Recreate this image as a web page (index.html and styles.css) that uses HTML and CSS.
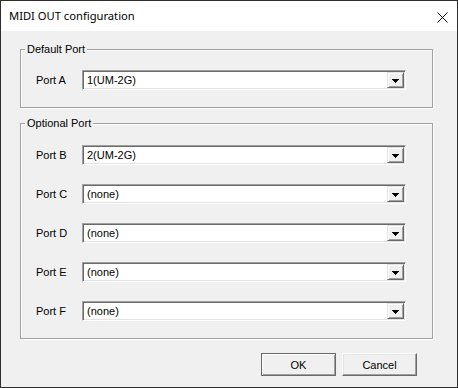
FILE: index.html
```html
<!DOCTYPE html>
<html lang="en">
<head>
  <meta charset="UTF-8" />
  <title>MIDI OUT configuration</title>
  <link rel="stylesheet" href="styles.css">
</head>
<body>
  <div class="window">
    <div class="titlebar">
      <span class="title">MIDI OUT configuration</span>
      <svg class="close" width="11" height="11" viewBox="0 0 11 11"><path d="M0.5 0.5L10.5 10.5M10.5 0.5L0.5 10.5" stroke="#000" stroke-width="1" fill="none"/></svg>
    </div>
    <div class="client">
      <div class="group group-default">
        <span class="group-title">Default Port</span>
        <div class="rows">
          <div class="row">
            <label>Port A</label>
            <div class="combo"><span class="value">1(UM-2G)</span><span class="drop"><svg width="7" height="4" viewBox="0 0 7 4" shape-rendering="crispEdges"><path d="M0 0h7v1H0zM1 1h5v1H1zM2 2h3v1H2zM3 3h1v1H3z" fill="#000"/></svg></span></div>
          </div>
        </div>
      </div>
      <div class="group group-optional">
        <span class="group-title">Optional Port</span>
        <div class="rows">
          <div class="row">
            <label>Port B</label>
            <div class="combo"><span class="value">2(UM-2G)</span><span class="drop"><svg width="7" height="4" viewBox="0 0 7 4" shape-rendering="crispEdges"><path d="M0 0h7v1H0zM1 1h5v1H1zM2 2h3v1H2zM3 3h1v1H3z" fill="#000"/></svg></span></div>
          </div>
          <div class="row">
            <label>Port C</label>
            <div class="combo"><span class="value">(none)</span><span class="drop"><svg width="7" height="4" viewBox="0 0 7 4" shape-rendering="crispEdges"><path d="M0 0h7v1H0zM1 1h5v1H1zM2 2h3v1H2zM3 3h1v1H3z" fill="#000"/></svg></span></div>
          </div>
          <div class="row">
            <label>Port D</label>
            <div class="combo"><span class="value">(none)</span><span class="drop"><svg width="7" height="4" viewBox="0 0 7 4" shape-rendering="crispEdges"><path d="M0 0h7v1H0zM1 1h5v1H1zM2 2h3v1H2zM3 3h1v1H3z" fill="#000"/></svg></span></div>
          </div>
          <div class="row">
            <label>Port E</label>
            <div class="combo"><span class="value">(none)</span><span class="drop"><svg width="7" height="4" viewBox="0 0 7 4" shape-rendering="crispEdges"><path d="M0 0h7v1H0zM1 1h5v1H1zM2 2h3v1H2zM3 3h1v1H3z" fill="#000"/></svg></span></div>
          </div>
          <div class="row">
            <label>Port F</label>
            <div class="combo"><span class="value">(none)</span><span class="drop"><svg width="7" height="4" viewBox="0 0 7 4" shape-rendering="crispEdges"><path d="M0 0h7v1H0zM1 1h5v1H1zM2 2h3v1H2zM3 3h1v1H3z" fill="#000"/></svg></span></div>
          </div>
        </div>
      </div>
      <div class="buttons">
        <button class="btn btn-default">OK</button>
        <button class="btn">Cancel</button>
      </div>
    </div>
  </div>
</body>
</html>
```

FILE: styles.css
```css
*{margin:0;padding:0;box-sizing:border-box}
html,body{background:#f0f0f0}
body{font-family:'Liberation Sans',Arial,sans-serif;font-size:11px;color:#000}
.window{width:458px;height:388px;border:1px solid #2e2e2e;display:flex;flex-direction:column;background:#f0f0f0}
.titlebar{height:30px;background:#fff;display:flex;align-items:center;padding-left:8px;padding-right:9px}
.title{font-family:'Noto Sans','Open Sans',sans-serif;font-size:11.2px;color:#000;margin-top:-1px}
.close{margin-left:auto;margin-top:2px}
.client{flex:1;padding-left:19px}
/* etched group box */
.group{width:413px;border:1px solid #a0a0a0;box-shadow:1px 1px 0 #fff,inset 1px 1px 0 #fff;padding-bottom:17px;display:flex;flex-direction:column}
.group-title{align-self:flex-start;margin:-8px 0 14px 4px;padding:0 2px;line-height:14px;background:#f0f0f0}
.group-default{margin-top:18px}
.group-optional{margin-top:15px}
.group-optional .group-title{margin-bottom:15px}
.rows{display:flex;flex-direction:column;gap:19px;padding-left:15px}
.row{display:flex;align-items:center;height:20px}
.row label{width:46px;flex:none}
.combo{width:324px;height:20px;background:#fff;display:flex;align-items:center;border:1px solid;border-color:#a0a0a0 #fff #fff #a0a0a0;box-shadow:inset 1px 1px 0 #696969,inset -1px -1px 0 #e3e3e3;padding:1px}
.combo .value{flex:1;padding-left:3px;line-height:16px}
.drop{width:17px;height:16px;background:#f0f0f0;display:flex;align-items:center;justify-content:center;border:1px solid;border-color:#e3e3e3 #696969 #696969 #e3e3e3;box-shadow:inset 1px 1px 0 #fff,inset -1px -1px 0 #a0a0a0}
.drop svg{display:block;margin-top:1px}
.buttons{display:flex;justify-content:flex-end;gap:6px;margin-top:14px;padding-right:40px}
.btn{width:75px;height:23px;font-family:'Liberation Sans',Arial,sans-serif;font-size:11px;color:#000;background:#f0f0f0;border:1px solid;border-color:#fff #696969 #696969 #fff;box-shadow:inset -1px -1px 0 #a0a0a0,inset 1px 1px 0 #e3e3e3}
.btn-default{border:1px solid #696969;box-shadow:inset 1px 1px 0 #fff,inset -1px -1px 0 #a0a0a0}
```
